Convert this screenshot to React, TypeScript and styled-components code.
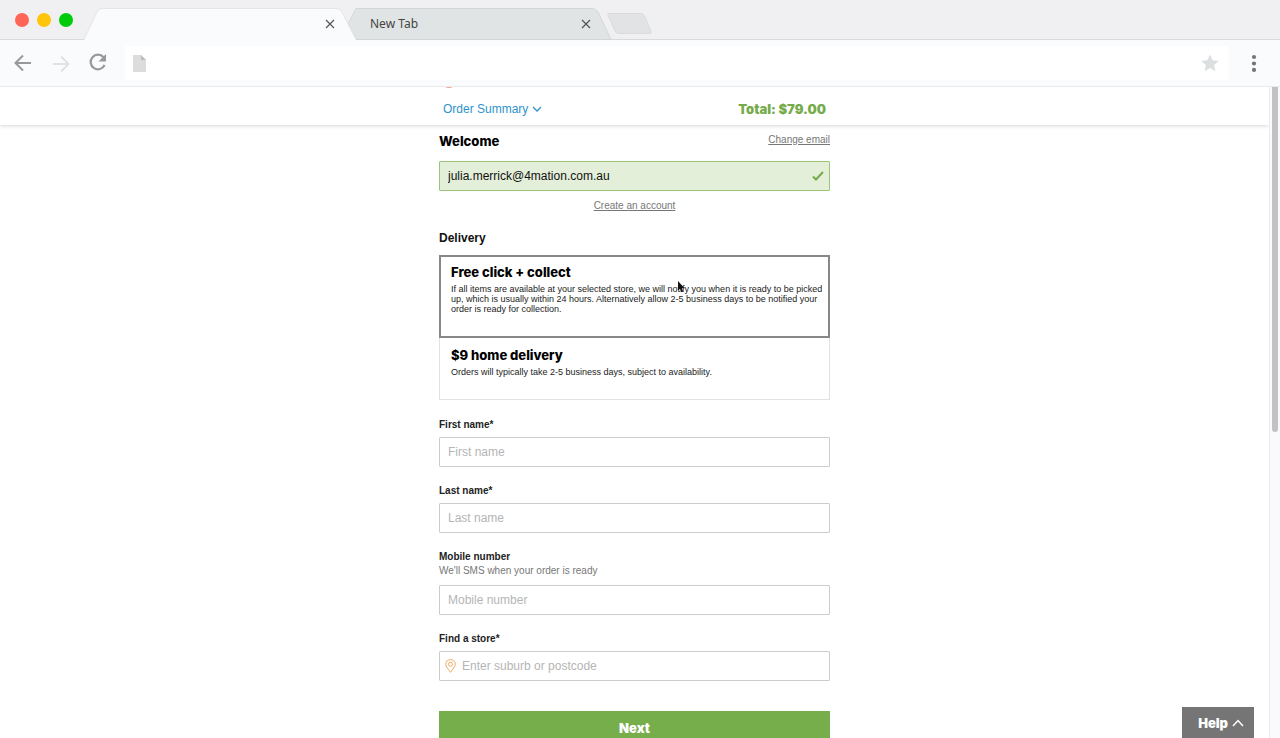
import React from "react";
import styled, { createGlobalStyle } from "styled-components";

const sans = `"Liberation Sans", Arial, sans-serif`;
const display = `Inter, "Liberation Sans", sans-serif`;

const GlobalStyle = createGlobalStyle`
  *, *::before, *::after { box-sizing: border-box; }
  body { margin: 0; background: #fff; font-family: ${sans}; color: #111; }
  button, input { font-family: inherit; }
  h1, h2, p { margin: 0; }
`;

const Browser = styled.div`
  display: flex;
  flex-direction: column;
  height: 100vh;
  overflow: hidden;
`;

const TabStrip = styled.div`
  display: flex;
  align-items: flex-end;
  height: 40px;
  padding-left: 15px;
  background: #f0f0f3;
  box-shadow: inset 0 -1px #d9dada;
`;

const Lights = styled.div`
  display: flex;
  align-self: center;
  gap: 8px;
  width: 69px;
`;

const Light = styled.span<{ $color: string }>`
  width: 14px;
  height: 14px;
  border-radius: 50%;
  background: ${(p) => p.$color};
`;

const Tab = styled.div<{ $active?: boolean }>`
  position: relative;
  z-index: ${(p) => (p.$active ? 2 : 1)};
  display: flex;
  align-items: center;
  justify-content: space-between;
  width: 272px;
  height: 32px;
  padding: 0 21px 0 30px;
  margin-left: ${(p) => (p.$active ? 0 : -16)}px;
  font: 12px/18px "Noto Sans", sans-serif;
  color: #444;
`;

const TabShape = styled.svg`
  position: absolute;
  inset: 0;
  z-index: -1;
`;

const CloseButton = styled.button`
  display: flex;
  margin-left: auto;
  padding: 0;
  border: 0;
  background: none;
  color: #555;
`;

const NewTabButton = styled.button`
  display: flex;
  align-self: flex-start;
  margin: 12px 0 0 -8px;
  padding: 0;
  border: 0;
  background: none;
`;

const Toolbar = styled.div`
  display: flex;
  align-items: center;
  height: 47px;
  padding: 0 16px 0 12px;
  background: #fafbfd;
  border-bottom: 1px solid #e9eaec;
`;

const NavButtons = styled.div`
  display: flex;
  align-items: center;
  gap: 16px;
  width: 113px;
`;

const IconButton = styled.button`
  display: flex;
  padding: 0;
  border: 0;
  background: none;
`;

const AddressBar = styled.div`
  display: flex;
  flex: 1;
  align-items: center;
  height: 34px;
  padding: 0 10px 0 8px;
  margin-right: 15px;
  border-radius: 3px;
  background: #fff;
`;

const AddressInput = styled.input`
  flex: 1;
  min-width: 0;
  margin: 0 8px;
  border: 0;
  outline: 0;
  background: none;
  font-size: 12px;
`;

const Viewport = styled.div`
  position: relative;
  display: flex;
  flex: 1;
  min-height: 0;
`;

const Page = styled.div`
  flex: 1;
  min-width: 0;
  overflow: hidden;
`;

const Scrollbar = styled.div`
  width: 11px;
  padding: 0 2px;
  background: #fafafc;
  border-left: 1px solid #ececee;
`;

const Thumb = styled.div`
  height: 53%;
  border-radius: 0 0 4px 4px;
  background: #c2c2c4;
`;

const SummaryBar = styled.header`
  position: relative;
  padding: 13px 0 7px;
  box-shadow: 0 1px 4px rgba(0, 0, 0, 0.16);
`;

const Column = styled.div`
  width: 100%;
  max-width: 391px;
  margin: 0 auto;
`;

const SummaryRow = styled(Column)`
  position: relative;
  display: flex;
  align-items: center;
  justify-content: space-between;
  padding: 0 4px;
`;

const LogoEdge = styled.svg`
  position: absolute;
  top: -13px;
  left: 5px;
`;

const SummaryToggle = styled.button`
  display: flex;
  align-items: center;
  gap: 4px;
  padding: 0;
  border: 0;
  background: none;
  color: #2e93cc;
  font-size: 12px;
  line-height: 18px;
`;

const Total = styled.strong`
  color: #76ab4b;
  font: 900 13px/18px ${display};
`;

const Form = styled.form`
  display: flex;
  flex-direction: column;
  padding-top: 7px;
`;

const WelcomeRow = styled.div`
  display: flex;
  justify-content: space-between;
  margin-bottom: 11px;
`;

const Heading = styled.h1`
  font: 800 13px/18px ${display};
  color: #000;
`;

const TextLink = styled.a`
  color: #777;
  font-size: 10px;
  line-height: 16px;
`;

const CreateLink = styled(TextLink)`
  align-self: center;
  margin: 7px 0 17px;
`;

const InputBox = styled.div<{ $valid?: boolean }>`
  display: flex;
  align-items: center;
  height: 30px;
  padding: 0 5px 0 8px;
  border: 1px solid ${(p) => (p.$valid ? "#9cc57c" : "#ccc")};
  border-radius: 1px;
  background: ${(p) => (p.$valid ? "#e3efd9" : "#fff")};
`;

const Input = styled.input`
  flex: 1;
  min-width: 0;
  padding: 0;
  border: 0;
  outline: 0;
  background: none;
  color: #111;
  font-size: 12px;
  line-height: 16px;
  &::placeholder { color: #b5b5b5; opacity: 1; }
`;

const PinIcon = styled.svg`
  margin: 0 6px 0 -3px;
`;

const SectionTitle = styled.legend`
  padding: 0;
  margin-bottom: 10px;
  font-size: 12px;
  font-weight: bold;
  line-height: 14px;
`;

const Options = styled.fieldset`
  display: flex;
  flex-direction: column;
  min-width: 0;
  padding: 0;
  margin: 0 0 19px;
  border: 0;
`;

const HiddenRadio = styled.input`
  position: absolute;
  width: 1px;
  height: 1px;
  margin: 0;
  opacity: 0;
`;

const Option = styled.label<{ $selected?: boolean }>`
  position: relative;
  display: block;
  padding: ${(p) => (p.$selected ? "7px 10px 22px" : "9px 11px 22px")};
  border: ${(p) => (p.$selected ? "2px solid #888" : "1px solid #e2e2e2")};
  border-top-width: ${(p) => (p.$selected ? 2 : 0)}px;
`;

const OptionTitle = styled.span`
  display: block;
  margin-bottom: 4px;
  color: #000;
  font: 800 13px/16px ${display};
`;

const OptionText = styled.span`
  display: block;
  color: #222;
  font-size: 9px;
  line-height: 10px;
  white-space: nowrap;
`;

const Field = styled.div`
  display: flex;
  flex-direction: column;
  margin-bottom: 18px;
`;

const Label = styled.label`
  color: #222;
  font-size: 10px;
  font-weight: bold;
  line-height: 12px;
`;

const Hint = styled.span`
  color: #777;
  font-size: 10px;
  line-height: 16px;
`;

const FieldBox = styled(InputBox)`
  margin-top: 6px;
`;

const NextButton = styled.button`
  margin-top: 12px;
  height: 34px;
  padding: 0;
  border: 0;
  background: #77ae4c;
  color: #fff;
  font: 900 13px/34px ${display};
`;

const HelpButton = styled.button`
  position: absolute;
  right: 26px;
  bottom: 0;
  display: flex;
  align-items: center;
  justify-content: flex-end;
  gap: 4px;
  width: 72px;
  height: 31px;
  padding: 0 10px;
  border: 0;
  background: #757575;
  color: #fff;
  font: 900 13px/18px ${display};
`;

const Cursor = styled.svg`
  position: absolute;
  top: 24px;
  left: 236px;
`;

const CloseIcon = () => (
  <svg width="10" height="10" viewBox="0 0 10 10" fill="none" stroke="currentColor" strokeWidth="1.2">
    <path d="M1 1l8 8M9 1L1 9" />
  </svg>
);

type TextFieldProps = { id: string; label: string; placeholder: string; hint?: string; icon?: React.ReactNode };

const TextField = ({ id, label, placeholder, hint, icon }: TextFieldProps) => (
  <Field>
    <Label htmlFor={id}>{label}</Label>
    {hint && <Hint>{hint}</Hint>}
    <FieldBox>
      {icon}
      <Input id={id} type="text" placeholder={placeholder} />
    </FieldBox>
  </Field>
);

export default function App() {
  return (
    <Browser>
      <GlobalStyle />
      <TabStrip>
        <Lights>
          <Light $color="#ff6557" />
          <Light $color="#ffc50a" />
          <Light $color="#00cc0a" />
        </Lights>
        <Tab $active>
          <TabShape width="272" height="32" viewBox="0 0 272 32">
            <path d="M0 32L13 4Q15 1 18 1H253Q256 1 258 4L272 32Z" fill="#fafbfd" />
            <path d="M0 31.5L13 4Q15 .5 18 .5H253Q256 .5 258 4L272 31.5" fill="none" stroke="#e4e5e5" />
          </TabShape>
          <CloseButton aria-label="Close tab"><CloseIcon /></CloseButton>
        </Tab>
        <Tab>
          <TabShape width="272" height="32" viewBox="0 0 272 32">
            <path d="M16 .5H252Q256 .5 258 4L271 31.5H16L8 16Z" fill="#e0e4e4" stroke="#d3d6d6" />
          </TabShape>
          New Tab
          <CloseButton aria-label="Close New Tab"><CloseIcon /></CloseButton>
        </Tab>
        <NewTabButton aria-label="Open new tab">
          <svg width="50" height="22" viewBox="0 0 50 22">
            <path d="M5 1.5H36Q39 1.5 40 3L47 19Q48 21.5 46 21.5H15Q12 21.5 11 19L4 3Q3 1.5 5 1.5Z" fill="#e1e3e5" stroke="#d9dbdc" />
          </svg>
        </NewTabButton>
      </TabStrip>

      <Toolbar>
        <NavButtons>
          <IconButton aria-label="Back">
            <svg width="22" height="22" viewBox="0 0 22 22" fill="none" stroke="#999" strokeWidth="2">
              <path d="M19 11H4M11 3.5L3.5 11L11 18.5" />
            </svg>
          </IconButton>
          <IconButton aria-label="Forward">
            <svg width="22" height="22" viewBox="0 0 22 22" fill="none" stroke="#e0e2e3" strokeWidth="2">
              <path d="M3 12H18M11 4.5L18.500 12L11 19.500" />
            </svg>
          </IconButton>
          <IconButton aria-label="Reload">
            <svg width="20" height="22" viewBox="0 0 20 22" fill="none">
              <path d="M15.500 5.200A7.300 7.300 0 1 0 16.600 13" stroke="#999" strokeWidth="2.200" />
              <path d="M18 2V9.500H10.500Z" fill="#999" />
            </svg>
          </IconButton>
        </NavButtons>
        <AddressBar>
          <svg width="13" height="17" viewBox="0 0 13 17">
            <path d="M0 0H8L13 5V17H0Z" fill="#dcdcdc" />
            <path d="M8 0L13 5H8Z" fill="#bdbdbd" />
          </svg>
          <AddressInput type="text" aria-label="Address" />
          <IconButton aria-label="Bookmark">
            <svg width="18" height="18" viewBox="0 0 18 18">
              <path d="M9 .5L11.600 6.300L17.800 6.900L13.100 11.100L14.500 17.300L9 14.100L3.500 17.300L4.900 11.100L.2 6.900L6.400 6.300Z" fill="#dcdfe0" />
            </svg>
          </IconButton>
        </AddressBar>
        <IconButton aria-label="Menu">
          <svg width="20" height="18" viewBox="0 0 20 18" fill="#757575">
            <circle cx="10" cy="3" r="2.100" />
            <circle cx="10" cy="9.500" r="2.100" />
            <circle cx="10" cy="15.900" r="2.100" />
          </svg>
        </IconButton>
      </Toolbar>

      <Viewport>
        <Page>
          <SummaryBar>
            <SummaryRow>
              <LogoEdge width="10" height="2" viewBox="0 0 10 2">
                <path d="M1 0H9Q5 2 1 0Z" fill="#eda58f" />
              </LogoEdge>
              <SummaryToggle>
                Order Summary
                <svg width="10" height="6" viewBox="0 0 10 6" fill="none" stroke="currentColor" strokeWidth="1.300">
                  <path d="M1 1L5 5L9 1" />
                </svg>
              </SummaryToggle>
              <Total>Total: $79.00</Total>
            </SummaryRow>
          </SummaryBar>

          <Column>
            <Form>
              <WelcomeRow>
                <Heading>Welcome</Heading>
                <TextLink href="#email">Change email</TextLink>
              </WelcomeRow>
              <InputBox $valid>
                <Input id="email" type="email" aria-label="Email" defaultValue="julia.merrick@4mation.com.au" />
                <svg width="12" height="10" viewBox="0 0 12 10" fill="none" stroke="#76ab4b" strokeWidth="2">
                  <path d="M1 5.500L4 8.500L11 1" />
                </svg>
              </InputBox>
              <CreateLink href="#account">Create an account</CreateLink>

              <Options>
                <SectionTitle>Delivery</SectionTitle>
                <Option $selected>
                  <HiddenRadio type="radio" name="delivery" defaultChecked />
                  <OptionTitle>Free click + collect</OptionTitle>
                  <OptionText>
                    If all items are available at your selected store, we will notify you when it is ready to be picked
                    <br />
                    up, which is usually within 24 hours. Alternatively allow 2-5 business days to be notified your
                    <br />
                    order is ready for collection.
                  </OptionText>
                  <Cursor width="8" height="12" viewBox="0 0 8 12">
                    <path d="M1 0V9.500L3 7.800L4.500 11.300L6.200 10.500L4.700 7.200H7.500Z" fill="#111" />
                  </Cursor>
                </Option>
                <Option>
                  <HiddenRadio type="radio" name="delivery" />
                  <OptionTitle>$9 home delivery</OptionTitle>
                  <OptionText>Orders will typically take 2-5 business days, subject to availability.</OptionText>
                </Option>
              </Options>

              <TextField id="first" label="First name*" placeholder="First name" />
              <TextField id="last" label="Last name*" placeholder="Last name" />
              <TextField id="mobile" label="Mobile number" placeholder="Mobile number" hint="We'll SMS when your order is ready" />
              <TextField
                id="store"
                label="Find a store*"
                placeholder="Enter suburb or postcode"
                icon={
                  <PinIcon width="11" height="14" viewBox="0 0 11 14" fill="none" stroke="#f0ab62">
                    <path d="M5.500 13.300C3.500 10.300.7 7.800.7 5.200A4.800 4.600 0 0 1 10.300 5.200C10.300 7.800 7.500 10.300 5.500 13.300Z" />
                    <circle cx="5.500" cy="5.200" r="2" />
                  </PinIcon>
                }
              />
              <NextButton type="button">Next</NextButton>
            </Form>
          </Column>
        </Page>
        <Scrollbar>
          <Thumb />
        </Scrollbar>
        <HelpButton>
          Help
          <svg width="12" height="8" viewBox="0 0 12 8" fill="none" stroke="currentColor" strokeWidth="1.500">
            <path d="M1 7L6 1.500L11 7" />
          </svg>
        </HelpButton>
      </Viewport>
    </Browser>
  );
}
